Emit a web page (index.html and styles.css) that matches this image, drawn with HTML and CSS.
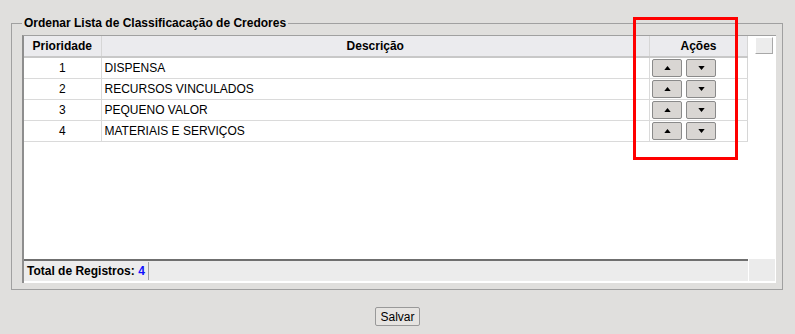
FILE: index.html
```html
<!DOCTYPE html>
<html lang="pt-BR">
<head>
    <meta charset="UTF-8">
    <title>Ordenar Lista de Classificacação de Credores</title>
    <link rel="stylesheet" href="styles.css">
</head>
<body>

<div class="screen">

    <fieldset class="box">
        <legend>Ordenar Lista de Classificacação de Credores</legend>

        <div class="grid">
            <div class="grid-main">
                <table class="list">
                    <thead>
                        <tr>
                            <th class="col-prio">Prioridade</th>
                            <th>Descrição</th>
                            <th class="col-acoes">Ações</th>
                        </tr>
                    </thead>
                    <tbody>
                        <tr>
                            <td class="num">1</td>
                            <td>DISPENSA</td>
                            <td class="acoes">
                                <button class="btn-move"><svg width="8" height="5" viewBox="0 0 8 5"><polygon points="0,5 8,5 4,0"/></svg></button><button class="btn-move"><svg width="8" height="5" viewBox="0 0 8 5"><polygon points="0,0 8,0 4,5"/></svg></button>
                            </td>
                        </tr>
                        <tr>
                            <td class="num">2</td>
                            <td>RECURSOS VINCULADOS</td>
                            <td class="acoes">
                                <button class="btn-move"><svg width="8" height="5" viewBox="0 0 8 5"><polygon points="0,5 8,5 4,0"/></svg></button><button class="btn-move"><svg width="8" height="5" viewBox="0 0 8 5"><polygon points="0,0 8,0 4,5"/></svg></button>
                            </td>
                        </tr>
                        <tr>
                            <td class="num">3</td>
                            <td>PEQUENO VALOR</td>
                            <td class="acoes">
                                <button class="btn-move"><svg width="8" height="5" viewBox="0 0 8 5"><polygon points="0,5 8,5 4,0"/></svg></button><button class="btn-move"><svg width="8" height="5" viewBox="0 0 8 5"><polygon points="0,0 8,0 4,5"/></svg></button>
                            </td>
                        </tr>
                        <tr>
                            <td class="num">4</td>
                            <td>MATERIAIS E SERVIÇOS</td>
                            <td class="acoes">
                                <button class="btn-move"><svg width="8" height="5" viewBox="0 0 8 5"><polygon points="0,5 8,5 4,0"/></svg></button><button class="btn-move"><svg width="8" height="5" viewBox="0 0 8 5"><polygon points="0,0 8,0 4,5"/></svg></button>
                            </td>
                        </tr>
                    </tbody>
                </table>
                <div class="gutter"><div class="corner"></div></div>
            </div>

            <div class="grid-foot">
                <div class="total"><span class="total-label">Total de Registros: <span class="count">4</span></span></div>
                <div class="foot-corner"></div>
            </div>
        </div>
    </fieldset>

    <div class="actions">
        <button class="btn-save">Salvar</button>
    </div>

    <!-- marcação em vermelho sobre a coluna de ações -->
    <div class="highlight"></div>

</div>

</body>
</html>
```

FILE: styles.css
```css
*{
    box-sizing: border-box;
}

body{
    margin: 0;
    background: #e0dfdd;
    font-family: "Liberation Sans", Arial, sans-serif;
    font-size: 12px;
    color: #000;
}

.screen{
    position: relative;
    height: 334px;
    padding-top: 16px;
}

.box{
    margin: 0 12px 0 11px;
    padding: 5px 6px 6px 10px;
    border: 1px solid #a0a0a0;
    min-width: 0;
}

.box legend{
    padding: 0 2px;
    font-weight: bold;
    font-size: 12px;
}

.grid{
    height: 248px;
    display: flex;
    flex-direction: column;
    background: #fff;
    border-top: 1px solid #a0a0a0;
    border-left: 2px solid #8e8e8e;
}

.grid-main{
    flex: 1;
    display: flex;
    min-height: 0;
}

.list{
    width: 724px;
    flex: 0 0 724px;
    align-self: flex-start;
    border-collapse: collapse;
    table-layout: fixed;
}

.list th{
    height: 21px;
    padding: 0;
    background: #ebebee;
    border-bottom: 2px solid #c8c8c8;
    border-right: 1px solid #d6d6d6;
    font-weight: bold;
    text-align: center;
}

.list th:last-child, .list td:last-child{
    border-right: 1px solid #d6d6d6;
}

.col-prio{
    width: 77px;
}

.col-acoes{
    width: 98px;
}

.list td{
    height: 21px;
    padding: 0 3px;
    border-bottom: 1px solid #dadada;
    border-right: 1px solid #dadada;
    white-space: nowrap;
}

.list td.num{
    text-align: center;
}

.list td.acoes{
    padding: 0 2px;
    font-size: 0;
}

.btn-move{
    width: 30px;
    height: 18px;
    margin-right: 4px;
    padding: 0;
    border: 1px solid #8a8a8a;
    border-radius: 2px;
    background: #d9d6d3;
    display: inline-flex;
    align-items: center;
    justify-content: center;
    vertical-align: middle;
}

.btn-move svg{
    fill: #000;
    width: 7px;
    height: 4px;
}

.gutter{
    flex: 1;
}

.corner{
    width: 18px;
    height: 17px;
    margin: 1px 0 0 7px;
    background: #ececec;
    border: 1px solid;
    border-color: #fff #a8a8a8 #a8a8a8 #fff;
}

.grid-foot{
    display: flex;
    height: 22px;
    margin-bottom: 2px;
}

.total{
    flex: 0 0 724px;
    display: flex;
    align-items: center;
    padding-left: 3px;
    background: #ececec;
    border-top: 2px solid #6f6f6f;
}

.total-label{
    font-weight: bold;
    line-height: 18px;
    padding-right: 3px;
    border-right: 1px solid #a0a0a0;
}

.count{
    color: #1010ff;
}

.foot-corner{
    flex: 1;
    margin-right: 1px;
    background: #ebebeb;
    border-left: 1px solid #fff;
}

.actions{
    margin-top: 17px;
    text-align: center;
}

.btn-save{
    height: 19px;
    padding: 0 4px;
    font-family: "Liberation Sans", Arial, sans-serif;
    font-size: 12px;
    color: #000;
    background: #e6e4e1;
    border: 1px solid #999;
    border-radius: 2px;
}

.highlight{
    position: absolute;
    left: 633px;
    top: 17px;
    width: 105px;
    height: 143px;
    border: 3px solid #ff0000;
}
```
